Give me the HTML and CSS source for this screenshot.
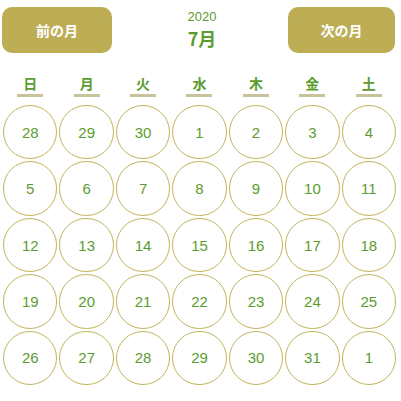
FILE: index.html
```html
<!DOCTYPE html>
<html lang="ja">
<head>
<meta charset="utf-8">
<link rel="stylesheet" href="styles.css">
</head>
<body>
<div class="cal">
  <div class="header">
    <button class="btn btn-prev">前の月</button>
    <div class="title">
      <div class="year">2020</div>
      <div class="month">7月</div>
    </div>
    <button class="btn btn-next">次の月</button>
  </div>
  <div class="weekdays">
    <div class="wd"><span>日</span></div>
    <div class="wd"><span>月</span></div>
    <div class="wd"><span>火</span></div>
    <div class="wd"><span>水</span></div>
    <div class="wd"><span>木</span></div>
    <div class="wd"><span>金</span></div>
    <div class="wd"><span>土</span></div>
  </div>
  <div class="days">
    <div class="cell"><div class="day">28</div></div>
    <div class="cell"><div class="day">29</div></div>
    <div class="cell"><div class="day">30</div></div>
    <div class="cell"><div class="day">1</div></div>
    <div class="cell"><div class="day">2</div></div>
    <div class="cell"><div class="day">3</div></div>
    <div class="cell"><div class="day">4</div></div>
    <div class="cell"><div class="day">5</div></div>
    <div class="cell"><div class="day">6</div></div>
    <div class="cell"><div class="day">7</div></div>
    <div class="cell"><div class="day">8</div></div>
    <div class="cell"><div class="day">9</div></div>
    <div class="cell"><div class="day">10</div></div>
    <div class="cell"><div class="day">11</div></div>
    <div class="cell"><div class="day">12</div></div>
    <div class="cell"><div class="day">13</div></div>
    <div class="cell"><div class="day">14</div></div>
    <div class="cell"><div class="day">15</div></div>
    <div class="cell"><div class="day">16</div></div>
    <div class="cell"><div class="day">17</div></div>
    <div class="cell"><div class="day">18</div></div>
    <div class="cell"><div class="day">19</div></div>
    <div class="cell"><div class="day">20</div></div>
    <div class="cell"><div class="day">21</div></div>
    <div class="cell"><div class="day">22</div></div>
    <div class="cell"><div class="day">23</div></div>
    <div class="cell"><div class="day">24</div></div>
    <div class="cell"><div class="day">25</div></div>
    <div class="cell"><div class="day">26</div></div>
    <div class="cell"><div class="day">27</div></div>
    <div class="cell"><div class="day">28</div></div>
    <div class="cell"><div class="day">29</div></div>
    <div class="cell"><div class="day">30</div></div>
    <div class="cell"><div class="day">31</div></div>
    <div class="cell"><div class="day">1</div></div>
  </div>
</div>
</body>
</html>
```
FILE: styles.css
```css
html, body {
  margin: 0;
  padding: 0;
  background: #ffffff;
}
body {
  font-family: "Liberation Sans", "Noto Sans CJK JP", sans-serif;
  color: #5c9c2f;
}
.cal {
  width: 401px;
  padding: 7px 4px 0 2px;
  box-sizing: border-box;
}
.header {
  display: flex;
  align-items: flex-start;
  justify-content: space-between;
  height: 46px;
}
.btn {
  height: 46px;
  border: none;
  border-radius: 10px;
  background: #bdae56;
  color: #ffffff;
  font-family: "Noto Sans CJK JP", sans-serif;
  font-weight: bold;
  font-size: 14px;
  padding: 0;
}
.btn-prev { width: 110px; }
.btn-next { width: 107px; margin-right: 2px; }
.title {
  display: flex;
  flex-direction: column;
  align-items: center;
  padding-left: 4px;
}
.year {
  font-size: 13px;
  line-height: 16px;
  margin-top: 2px;
}
.month {
  font-family: "Noto Sans CJK JP", sans-serif;
  font-weight: bold;
  font-size: 18px;
  line-height: 24px;
  margin-top: 1px;
}
.weekdays {
  display: grid;
  grid-template-columns: repeat(7, 1fr);
  margin-top: 21px;
}
.wd {
  display: flex;
  justify-content: center;
}
.wd span {
  display: block;
  width: 26px;
  text-align: center;
  font-family: "Noto Sans CJK JP", sans-serif;
  font-weight: bold;
  font-size: 14px;
  line-height: 18px;
  padding-bottom: 2px;
  border-bottom: 3px solid #c9c39b;
}
.days {
  display: grid;
  grid-template-columns: repeat(7, 1fr);
  margin-top: 7px;
}
.cell {
  aspect-ratio: 1 / 1;
  padding: 1px;
  box-sizing: border-box;
}
.day {
  width: 100%;
  height: 100%;
  box-sizing: border-box;
  border: 1px solid #c2b55c;
  border-radius: 50%;
  display: flex;
  align-items: center;
  justify-content: center;
  font-size: 15px;
}
```
